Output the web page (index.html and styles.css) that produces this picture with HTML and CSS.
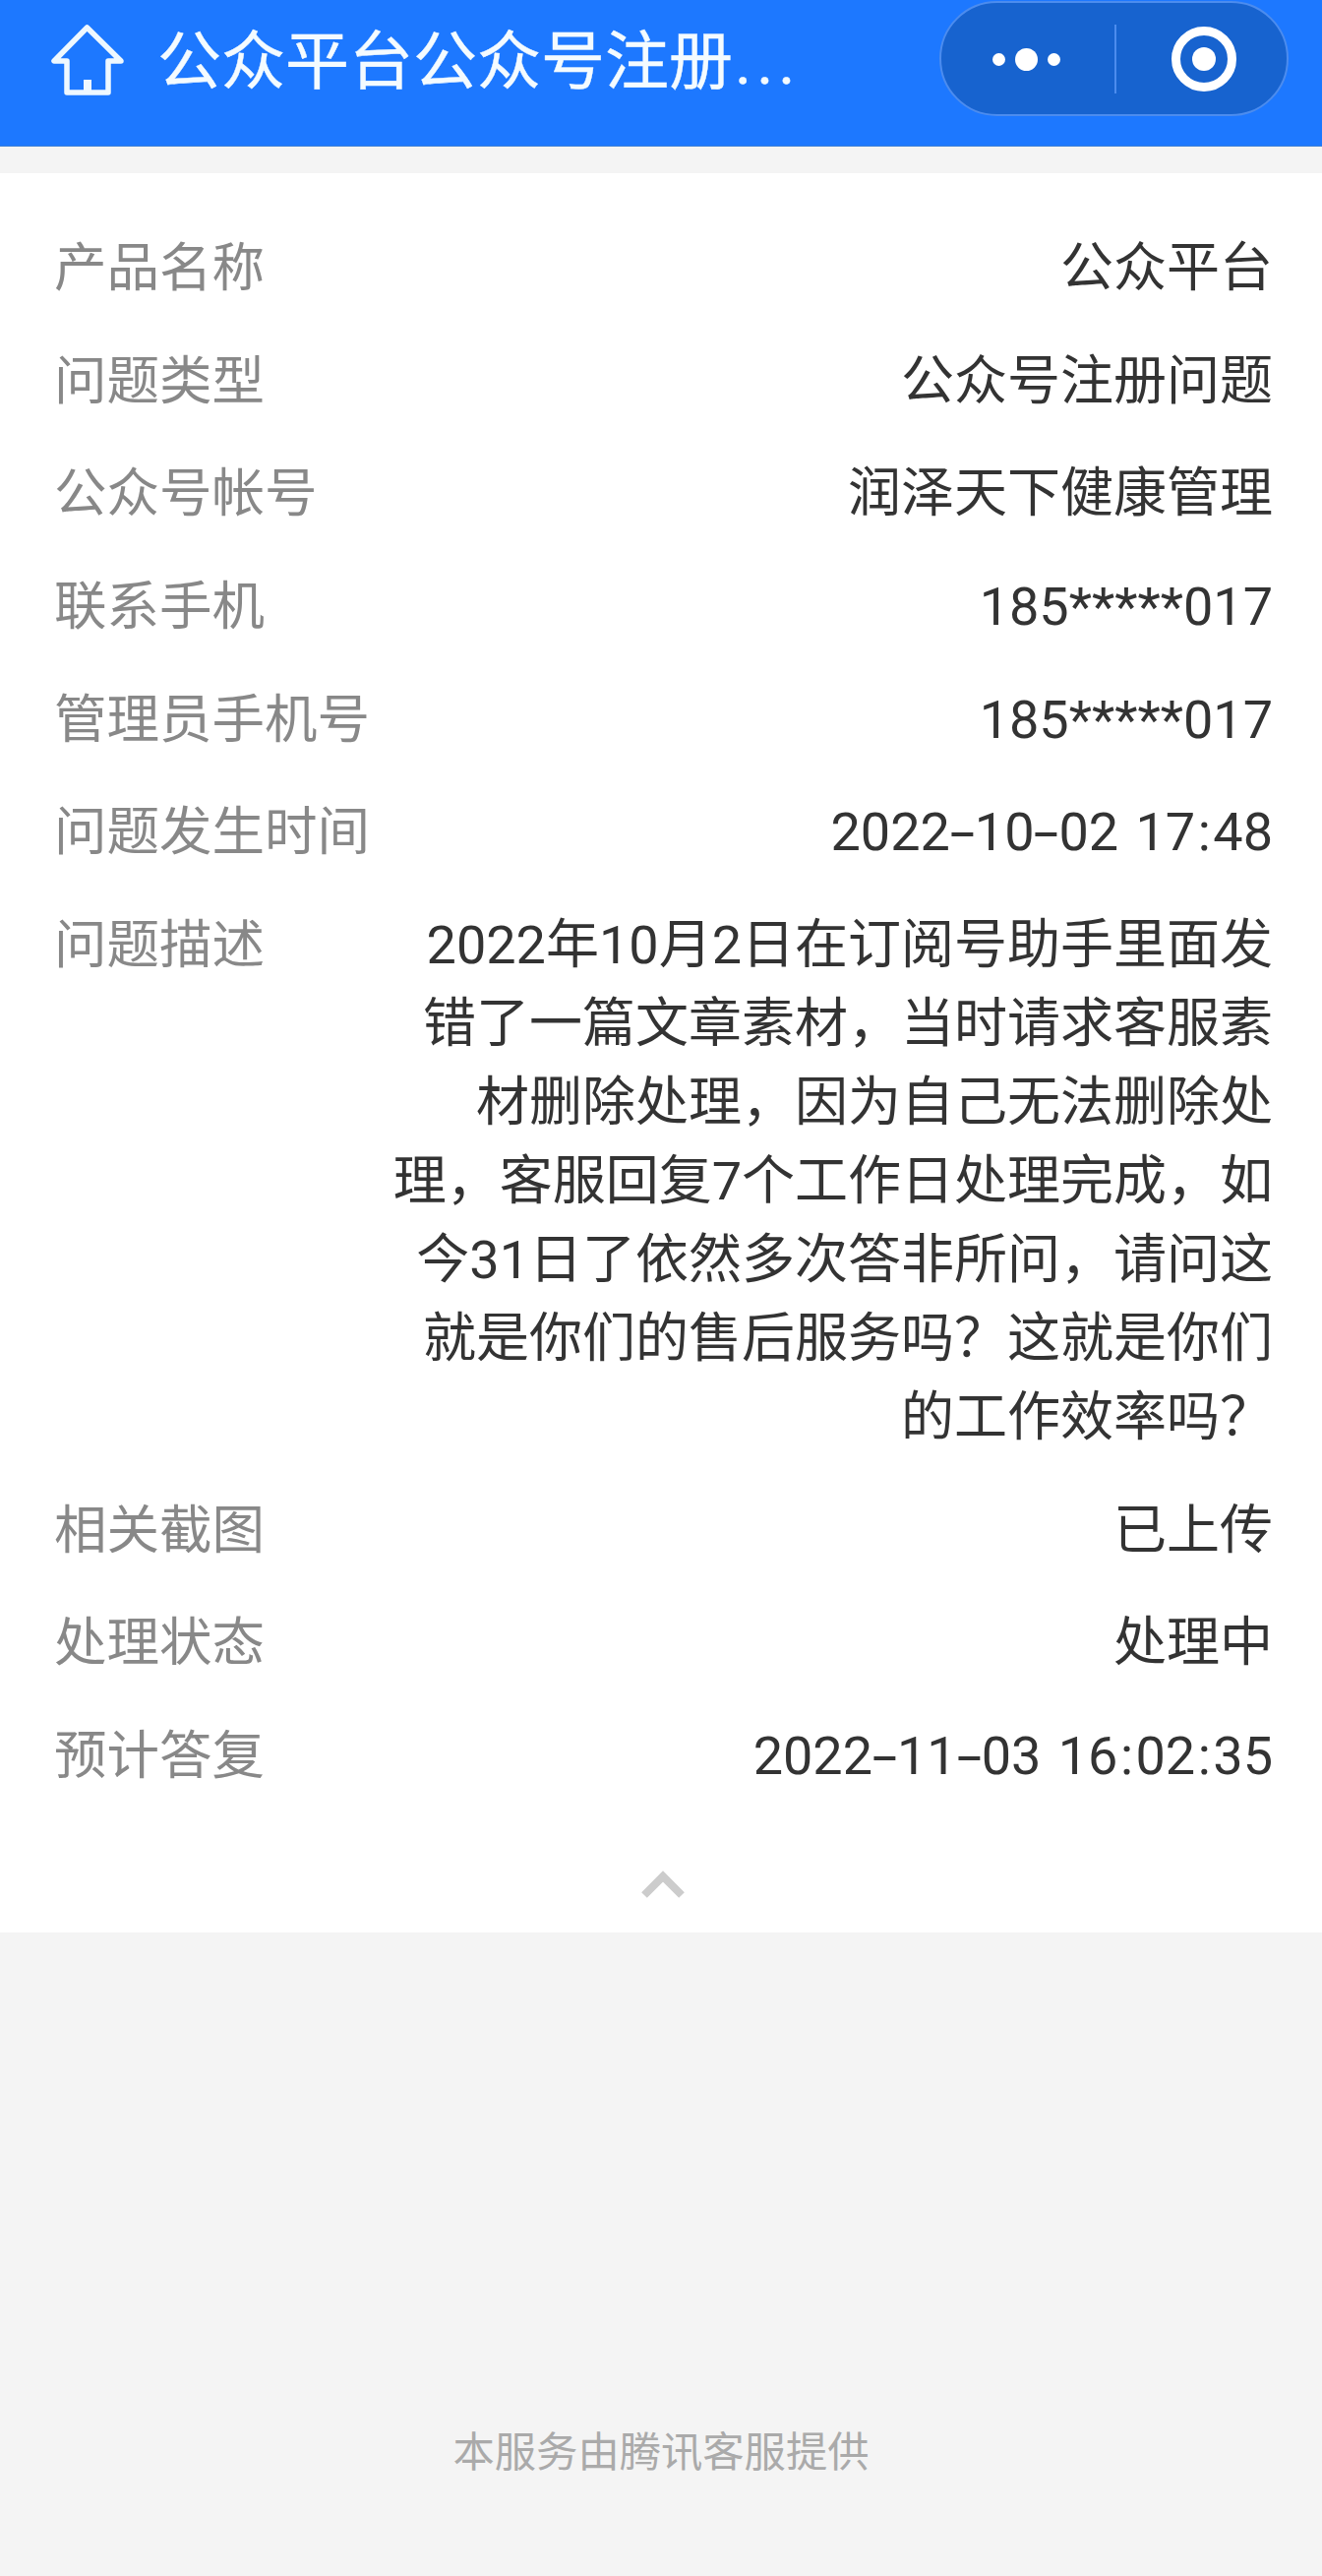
FILE: index.html
```html
<!DOCTYPE html>
<html lang="zh-CN">
<head>
<meta charset="utf-8">
<title>公众平台公众号注册问题</title>
<link rel="stylesheet" href="styles.css">
</head>
<body>
<header class="topbar">
  <svg class="home" width="80" height="80" viewBox="0 0 80 80" aria-hidden="true">
    <path class="home-line" d="M38.5 5 L5 39 H18 V71 H60 V39 H73 Z"/>
    <rect class="home-door" x="35" y="58" width="8" height="13"/>
  </svg>
  <h1 class="title">公众平台公众号注册<span class="dots">...</span></h1>
  <div class="capsule">
    <div class="capsule-more">
      <span class="dot"></span><span class="dot dot-big"></span><span class="dot"></span>
    </div>
    <div class="capsule-rule"></div>
    <div class="capsule-close"><span class="ring"></span></div>
  </div>
</header>
<main class="panel">
  <dl class="details">
    <div class="row"><dt>产品名称</dt><dd>公众平台</dd></div>
    <div class="row"><dt>问题类型</dt><dd>公众号注册问题</dd></div>
    <div class="row"><dt>公众号帐号</dt><dd>润泽天下健康管理</dd></div>
    <div class="row"><dt>联系手机</dt><dd>185*****017</dd></div>
    <div class="row"><dt>管理员手机号</dt><dd>185*****017</dd></div>
    <div class="row"><dt>问题发生时间</dt><dd class="time">2022<span class="hy">-</span>10<span class="hy">-</span>02 17<span class="col">:</span>48</dd></div>
    <div class="row"><dt>问题描述</dt><dd class="long">2022年10月2日在订阅号助手里面发<br>错了一篇文章素材，当时请求客服素<br>材删除处理，因为自己无法删除处<br>理，客服回复7个工作日处理完成，如<br>今31日了依然多次答非所问，请问这<br>就是你们的售后服务吗？这就是你们<br>的工作效率吗？</dd></div>
    <div class="row"><dt>相关截图</dt><dd>已上传</dd></div>
    <div class="row"><dt>处理状态</dt><dd>处理中</dd></div>
    <div class="row"><dt>预计答复</dt><dd class="time">2022<span class="hy">-</span>11<span class="hy">-</span>03 16<span class="col">:</span>02<span class="col">:</span>35</dd></div>
  </dl>
  <div class="collapse">
    <svg width="46" height="32" viewBox="0 0 46 32" aria-hidden="true"><path class="chevron" d="M4 27 L23 8 L42 27"/></svg>
  </div>
</main>
<footer class="foot">本服务由腾讯客服提供</footer>
</body>
</html>
```
FILE: styles.css
```css
* { box-sizing: border-box; }
html, body { margin: 0; padding: 0; }
body {
  width: 1344px;
  height: 2618px;
  display: flex;
  flex-direction: column;
  background: #f4f4f4;
  font-family: Roboto, "Noto Sans CJK SC", sans-serif;
  overflow: hidden;
}
.topbar {
  height: 149px;
  flex: none;
  display: flex;
  align-items: flex-start;
  padding: 1px 34px 0 50px;
  background: #1d78ff;
  border-bottom: 1px solid #3b7fd6;
  color: #fff;
}
.home { flex: none; margin-top: 22px; }
.home-line {
  fill: none;
  stroke: #eef8ff;
  stroke-width: 5.5;
  stroke-linejoin: round;
}
.home-door { fill: #eef8ff; }
.title {
  flex: 1;
  margin: 22px 0 0 30px;
  font-size: 65px;
  line-height: 80px;
  font-weight: 400;
  white-space: nowrap;
  color: #f4fbff;
  -webkit-text-stroke: 0.4px #f4fbff;
}
.dots { letter-spacing: 5px; margin-left: 2px; }
.capsule {
  flex: none;
  width: 355px;
  height: 117px;
  padding-top: 1px;
  display: flex;
  align-items: center;
  background: #1763cf;
  border: 2px solid #4c8cee;
  border-radius: 59px;
}
.capsule-more {
  width: 176px;
  padding-right: 4px;
  display: flex;
  align-items: center;
  justify-content: center;
  gap: 10px;
}
.dot { width: 13px; height: 13px; border-radius: 50%; background: #fff; }
.dot-big { width: 23px; height: 23px; }
.capsule-rule { width: 2px; height: 70px; background: #4c8cee; }
.capsule-close {
  flex: 1;
  display: flex;
  align-items: center;
  justify-content: center;
  padding-left: 5px;
}
.ring {
  width: 66px;
  height: 66px;
  border-radius: 50%;
  border: 9px solid #fff;
  display: flex;
  align-items: center;
  justify-content: center;
}
.ring::after {
  content: "";
  width: 24px;
  height: 24px;
  border-radius: 50%;
  background: #fff;
}
.panel {
  margin-top: 27px;
  height: 1788px;
  flex: none;
  padding: 57px 50px 0 55px;
  background: #fff;
}
.details {
  margin: 0;
  display: flex;
  flex-direction: column;
  gap: 34.67px;
  font-size: 54px;
  line-height: 80px;
}
.row { display: flex; justify-content: space-between; align-items: flex-start; }
.row dt { color: #888; flex: none; font-size: 53.5px; }
.row dd { margin: 0; color: #333; text-align: right; }
.time { word-spacing: 4px; }
.hy {
  display: inline-block;
  margin: 0 5px;
  transform: scaleX(1.7);
}
.col { margin: 0 2.5px; }
.collapse {
  display: flex;
  justify-content: center;
  margin-top: 74px;
  margin-left: -1px;
}
.chevron { fill: none; stroke: #ccc; stroke-width: 8; }
.foot {
  margin-top: 499px;
  text-align: center;
  font-size: 42.3px;
  line-height: 60px;
  color: #aaa;
}
```
